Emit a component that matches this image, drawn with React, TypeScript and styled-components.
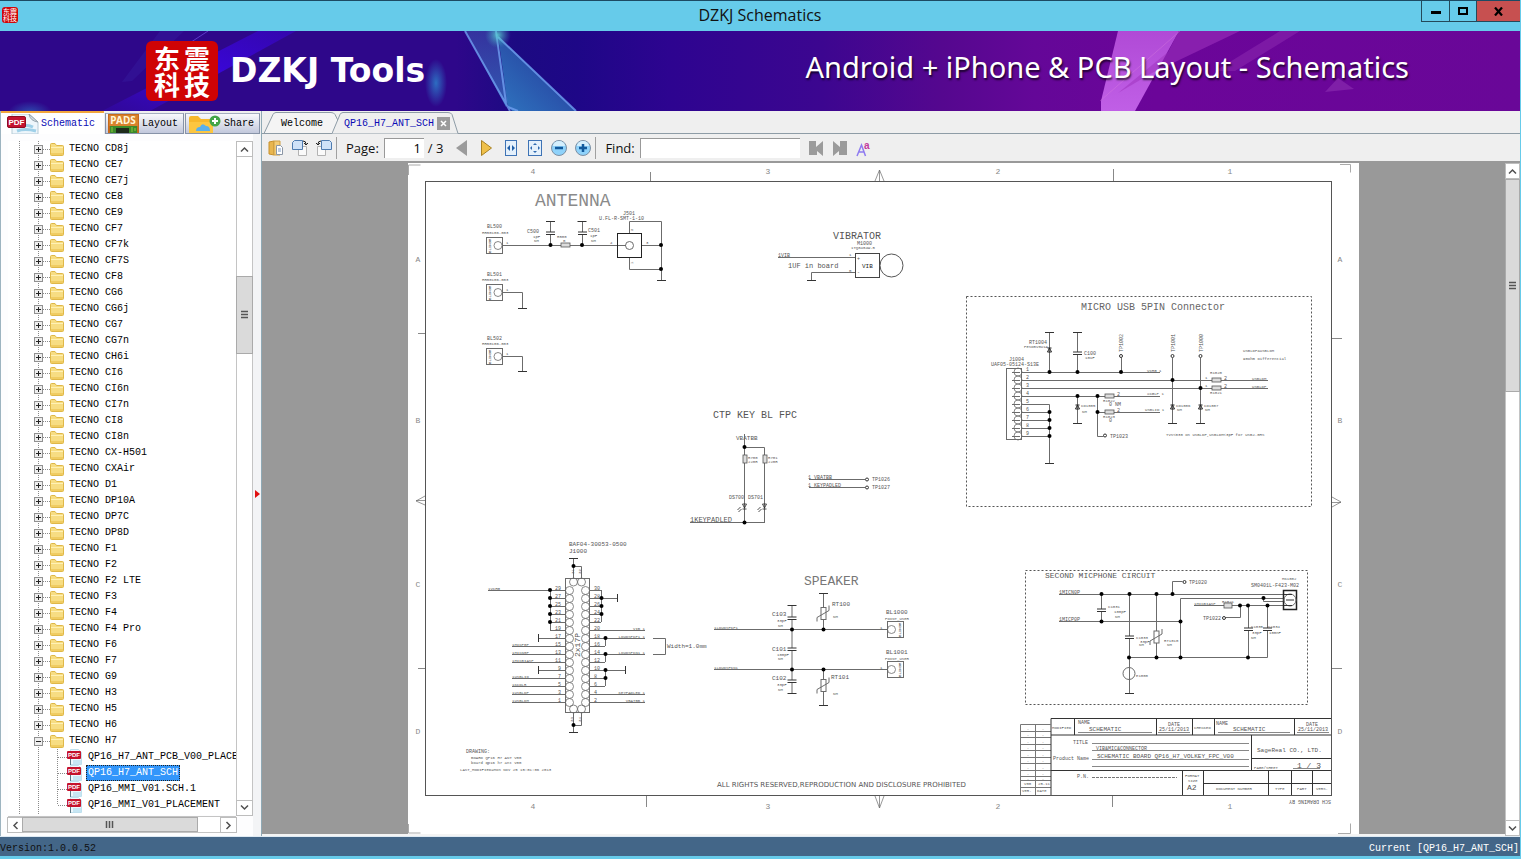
import React from 'react';
import styled, { createGlobalStyle, css } from 'styled-components';

const GlobalStyle = createGlobalStyle`
  *, *::before, *::after { box-sizing: border-box; }
  body { margin: 0; background: #66cbea; }
  button { margin: 0; padding: 0; border: 0; background: none; font: inherit; color: inherit; }
  ul { margin: 0; padding: 0; list-style: none; }
  svg { display: block; }
`;

const song = '"Liberation Mono", "Noto Sans CJK SC", monospace';
const segoe = '"Open Sans", "Noto Sans", sans-serif';

/* ---------- window frame ---------- */

const Window = styled.div`
  display: flex;
  flex-direction: column;
  min-height: 100vh;
  border-right: 1px solid #66cbea;
  border-bottom: 3px solid #66cbea;
`;

const TitleBar = styled.header`
  display: grid;
  grid-template-columns: 1fr auto 1fr;
  height: 31px;
  border-top: 1px solid #1c4a63;
  background: #66cbea;
`;

const AppTitle = styled.h1`
  margin: 0;
  font: 400 16px/29px ${segoe};
  color: #111;
`;

const SmallLogo = styled.div`
  display: grid;
  grid-template-columns: 7px 7px;
  align-content: center;
  justify-content: center;
  width: 16px;
  height: 16px;
  margin: 6px 0 0 2px;
  border-radius: 3px;
  background: #d0060a;
  color: #fff;
  font: 400 7px/7px "Noto Sans CJK SC", sans-serif;
`;

const WindowControls = styled.div`
  display: flex;
  justify-self: end;
  height: 21px;
  border: 1px solid #24495a;
  border-top: 0;
  border-right: 0;
`;

const WindowButton = styled.button<{ $close?: boolean }>`
  display: flex;
  align-items: center;
  justify-content: center;
  width: ${(p) => (p.$close ? 44 : 27)}px;
  border-left: 1px solid #24495a;
  background: ${(p) => (p.$close ? '#c75050' : 'transparent')};
  &:first-child { border-left: 0; }
`;

const Banner = styled.section`
  display: grid;
  height: 80px;
  overflow: hidden;
  background: linear-gradient(90deg, #2e078a 0%, #2e078a 30%, #1c0a82 34%, #1e0787 38%, #2d0490 44%, #3c0690 54%, #55078f 62%, #640798 68%, #6b0599 76%, #690798 100%);
  > * { grid-area: 1 / 1; }
`;

const BannerArt = styled.svg`
  width: 1521px;
  height: 80px;
`;

const BannerContent = styled.div`
  display: flex;
  align-items: center;
  padding: 0 112px 0 146px;
  color: #fff;
  z-index: 1;
`;

const Logo = styled.div`
  display: grid;
  grid-template-columns: 30px 30px;
  place-content: center;
  width: 72px;
  height: 60px;
  border-radius: 6px;
  background: #cf0305;
  text-align: center;
  font: 700 26px/26px "Noto Sans CJK SC", sans-serif;
`;

const Brand = styled.strong`
  margin-left: 12px;
  font: 700 33px/40px "DejaVu Sans", "Noto Sans", sans-serif;
`;

const Slogan = styled.p`
  margin: 0 0 8px auto;
  font: 400 29px/36px "Noto Sans", sans-serif;
  text-shadow: 1px 2px 2px rgba(0, 0, 0, 0.7);
`;

const Main = styled.main`
  display: flex;
  flex: 1;
  background: #fff;
`;

const StatusBar = styled.footer`
  display: flex;
  justify-content: space-between;
  height: 20px;
  padding: 3px 1px 0 0;
  border-top: 1px solid #dfeaf3;
  background: #436688;
  font: 10px/18px ${song};
  color: #fff;
`;

const Version = styled.span`
  color: #111;
`;

/* ---------- left side ---------- */

const Side = styled.aside`
  display: flex;
  flex-direction: column;
  width: 262px;
  border-left: 1px solid #9db4c0;
  border-right: 1px solid #8fa9b5;
  background: #fdfdfe;
`;

const SideTabs = styled.div`
  display: flex;
  gap: 1px;
  height: 23px;
  padding-right: 1px;
  background: #efefef;
`;

const SideTab = styled.button<{ $active?: boolean; $width: number }>`
  display: flex;
  align-items: center;
  gap: 3px;
  width: ${(p) => p.$width}px;
  padding: 0 2px;
  border: 1px solid #8793a8;
  border-top-color: #a4afc0;
  background: linear-gradient(#f8f9fc, #c2c8dc);
  font: 10px/20px ${song};
  margin-top: 2px;
  ${(p) =>
    p.$active &&
    css`
      margin-top: 0;
      gap: 2px;
      padding-left: 6px;
      border: 0;
      border-top: 2px solid #f2a63c;
      background: #fff;
      color: #0b0bb5;
    `}
`;

const TreeArea = styled.div`
  display: grid;
  grid-template-columns: 1fr 17px;
  grid-template-rows: 1fr 17px;
  margin: 7px 0 3px 7px;
`;

const SideBody = styled.div`
  display: grid;
  grid-template-columns: 1fr 8px;
  flex: 1;
`;

const Tree = styled.ul`
  overflow: hidden;
  width: 228px;
  height: 674px;
  background: #fff;
  font: 10px/16px ${song};
  color: #000;
`;

const dots = (dir: string) =>
  `repeating-linear-gradient(${dir}, #8a8a8a 0 1px, transparent 1px 2px)`;

const TreeItem = styled.li`
  display: flex;
  align-items: center;
  height: 16px;
  white-space: nowrap;
  > * { flex: none; }
`;

const Guide = styled.span<{ $width: number; $at: number }>`
  width: ${(p) => p.$width}px;
  height: 16px;
  background: ${dots('180deg')} ${(p) => p.$at}px 0 / 1px 16px no-repeat;
`;

const Twig = styled.span<{ $width: number }>`
  width: ${(p) => p.$width}px;
  height: 1px;
  background: ${dots('90deg')};
`;

const Elbow = styled(Guide)<{ $last?: boolean }>`
  background-size: 1px ${(p) => (p.$last ? 8 : 16)}px;
`;

const ExpanderCell = styled.span`
  display: flex;
  align-items: center;
  width: 9px;
  height: 16px;
  background: ${dots('180deg')} 4px 0 / 1px 16px no-repeat;
`;

const Expander = styled.button`
  width: 9px;
  height: 9px;
  border: 1px solid #919191;
  background: #eee;
`;

const TreeLabel = styled.span<{ $selected?: boolean }>`
  margin-left: 3px;
  padding: 0 1px;
  border: 1px dotted transparent;
  line-height: 14px;
  ${(p) =>
    p.$selected &&
    css`
      border-color: #222;
      background: #3296fb;
      color: #fff;
    `}
`;

const VBar = styled.div`
  display: flex;
  flex-direction: column;
  border-left: 1px solid #c4c4c4;
  border-right: 1px solid #c4c4c4;
  background: #fff;
`;

const HBar = styled.div`
  display: flex;
  border-top: 1px solid #c4c4c4;
  border-bottom: 1px solid #c4c4c4;
  background: #fff;
`;

const ArrowButton = styled.button`
  display: flex;
  align-items: center;
  justify-content: center;
  flex: none;
  width: 17px;
  height: 16px;
  margin: 0 -1px;
  border: 1px solid #bdbdbd;
  background: #fff;
`;

const Track = styled.span<{ $grow: number }>`
  flex: ${(p) => p.$grow} 1 0;
`;

const Thumb = styled.span<{ $grow: number }>`
  display: flex;
  align-items: center;
  justify-content: center;
  flex: ${(p) => p.$grow} 1 0;
  margin: 0 -1px;
  border: 1px solid #aaa;
  background: #dadada;
`;

const Splitter = styled.button`
  display: flex;
  align-items: center;
  padding: 18px 0 0 2px;
  background: #f3f4f6;
`;

/* ---------- right side ---------- */

const Document = styled.section`
  display: flex;
  flex: 1;
  flex-direction: column;
  min-width: 0;
`;

const DocTabs = styled.div`
  display: flex;
  height: 23px;
  padding-left: 2px;
  border-bottom: 1px solid #8e9ca6;
  background: #efefef;
`;

const DocTab = styled.button<{ $active?: boolean }>`
  display: grid;
  height: 23px;
  margin-top: 1px;
  margin-left: ${(p) => (p.$active ? -11 : 0)}px;
  font: 10px/22px ${song};
  color: ${(p) => (p.$active ? '#0b0bb5' : '#000')};
  > * { grid-area: 1 / 1; }
`;

const DocTabText = styled.span<{ $active?: boolean }>`
  display: flex;
  align-items: center;
  gap: 3px;
  padding-left: ${(p) => (p.$active ? 12 : 17)}px;
`;

const CloseMark = styled.span`
  display: flex;
  align-items: center;
  justify-content: center;
  width: 13px;
  height: 13px;
  background: #9b9b9b;
`;

const Toolbar = styled.div`
  display: flex;
  align-items: center;
  gap: 8px;
  height: 29px;
  padding-left: 6px;
  border-bottom: 2px solid #999;
  background: #efefef;
  font: 13px/20px ${segoe};
  color: #111;
  > * { flex: none; }
`;

const ToolButton = styled.button`
  display: flex;
  align-items: center;
  justify-content: center;
  width: 16px;
  height: 20px;
`;

const Separator = styled.span`
  width: 1px;
  height: 22px;
  margin: 0 1px 0 -4px;
  background: #a0a0a0;
`;

const Field = styled.label`
  display: flex;
  align-items: center;
  gap: 5px;
`;

const FieldInput = styled.input<{ $width: number }>`
  width: ${(p) => p.$width}px;
  height: 20px;
  padding: 0 3px;
  border: 0;
  border-top: 1px solid #999;
  border-left: 1px solid #999;
  background: #fff;
  font: 13px/18px ${segoe};
  text-align: right;
`;

const PageTotal = styled.span`
  margin-left: -4px;
  margin-right: 4px;
`;

const Viewer = styled.div`
  display: flex;
  flex: 1;
  background: #999;
`;

const Desk = styled.div`
  display: flex;
  justify-content: center;
  flex: 1;
  min-width: 0;
  overflow: hidden;
  border-bottom: 2px solid #f4f4f4;
`;

const ViewerBar = styled(VBar)`
  width: 15px;
  ${ArrowButton} {
    width: 15px;
  }
`;

const Sheet = styled.svg`
  flex: none;
  width: 951px;
  height: 671px;
  background: #fff;
  font-family: "Liberation Mono", monospace;
`;

/* ---------- small drawings ---------- */

const Chevron = ({ turn }: { turn: number }) => (
  <svg width="9" height="9" viewBox="0 0 9 9">
    <path d="M1 6.5 4.5 3 8 6.5" fill="none" stroke="#505050" strokeWidth="1.5" transform={`rotate(${turn} 4.5 4.5)`} />
  </svg>
);

const Grip = ({ upright }: { upright?: boolean }) => (
  <svg width="9" height="9" viewBox="0 0 9 9">
    <path d="M1 1.5h7M1 4.5h7M1 7.5h7" stroke="#555" strokeWidth="1.5" transform={upright ? 'rotate(90 4.5 4.5)' : undefined} />
  </svg>
);

const FolderIcon = () => (
  <svg width="14" height="13" viewBox="0 0 14 13">
    <path d="M.5 1.5q0-1 1-1H5l1.5 2h6q1 0 1 1v8q0 1-1 1h-11q-1 0-1-1z" fill="#f7dd83" stroke="#dfb848" />
    <path d="M1 4h12v1H1z" fill="#fff1b5" />
    <path d="M1 10h12v2H1z" fill="#f0cc62" />
  </svg>
);

const PdfIcon = ({ large }: { large?: boolean }) => (
  <svg width={large ? 32 : 16} height={large ? 20 : 16} viewBox={large ? '0 0 32 20' : '0 0 16 16'}>
    {large ? (
      <>
        <path d="M5 0h17l9 8v12H5z" fill="#eef6fb" stroke="#b6cbd6" />
        <path d="M22 0q1 7 9 8l-9-8" fill="#cfd9df" stroke="#98a6ae" />
        <path d="M12 12q8-2 14 1M10 17q8-3 19 0" stroke="#9fd0e8" strokeWidth="3" fill="none" />
        <rect x=".5" y="2.5" width="18" height="11" rx="1.5" fill="#c41230" stroke="#8e0b20" />
        <text x="9.500" y="11" fontSize="8" fontWeight="700" fill="#fff" textAnchor="middle" fontFamily="Liberation Sans">PDF</text>
      </>
    ) : (
      <>
        <path d="M3.500 .5h8l3 3v12h-11z" fill="#eef8fd" stroke="#bfe0ee" />
        <path d="M6 12h8M6 14h8" stroke="#9fd4ea" />
        <path d="M3.500 9v7" stroke="#5c7884" />
        <rect x="0" y="2" width="14" height="8" rx="1" fill="#c5122c" />
        <text x="7" y="8" fontSize="6" fontWeight="700" fill="#fff" textAnchor="middle" fontFamily="Liberation Sans">PDF</text>
      </>
    )}
  </svg>
);

const PadsIcon = () => (
  <svg width="31" height="19" viewBox="0 0 31 19">
    <rect width="31" height="19" fill="#c66a1c" />
    <rect x="1" y="1" width="29" height="11" fill="#d8822c" />
    <text x="15" y="10" fontSize="10" fontWeight="700" fill="#fff6d8" textAnchor="middle" fontFamily="Noto Sans">PADS</text>
    <rect x="2" y="12" width="27" height="7" fill="#3c8a2a" />
    <rect x="8" y="14" width="13" height="5" fill="#1d2b1a" />
    <path d="M4 13v5M24 13v5M27 14v3" stroke="#8cc63f" />
  </svg>
);

const ShareIcon = () => (
  <svg width="33" height="19" viewBox="0 0 33 19">
    <path d="M1 4q0-2 2-2h7l3 3h9q3 0 3 2v12H1z" fill="#f7b82c" />
    <path d="M1 8h24v11H1z" fill="#fcc640" />
    <path d="M8 17q0-4 4-4 2-5 6-1 4 0 4 5z" fill="#5ab0ea" />
    <circle cx="27" cy="7" r="5.500" fill="#43a548" />
    <path d="M27 4v6M24 7h6" stroke="#fff" strokeWidth="2" />
  </svg>
);

const ToolIcon = ({ kind }: { kind: string }) => (
  <svg width="16" height="18" viewBox="0 0 16 18">
    {kind === 'open' && (
      <>
        <path d="M1 3 6 2v14l-5-1z" fill="#e8b64f" stroke="#c8912c" />
        <path d="M6 2h6v14H6z" fill="#f3cd78" stroke="#cfa044" />
        <path d="M8.500 6.500h4l2 2v7h-6z" fill="#fff" stroke="#8b96a5" />
        <path d="M10 10h3M10 12h3" stroke="#7a9ac4" />
      </>
    )}
    {(kind === 'left' || kind === 'right') && (
      <g transform={kind === 'right' ? 'translate(16 0) scale(-1 1)' : undefined}>
        <path d="M8.500 7.500h6v9h-8v-6" fill="#fafafa" stroke="#b3b3b3" />
        <path d="M2.500 1.500h8v9h-10v-7z" fill="#cfe2f8" stroke="#4f7cb0" />
        <path d="M11 2q3 0 3 3M12 4l2 2 2-2" fill="none" stroke="#222" />
      </g>
    )}
    {kind === 'prev' && <path d="M12 1v16L1 9z" fill="#9b9b9b" />}
    {kind === 'next' && <path d="M2.500 1.500v15l10-7.500z" fill="#efc04a" stroke="#a98224" />}
    {kind === 'width' && (
      <>
        <rect x="2.500" y="1.500" width="11" height="15" fill="#e4f0fb" stroke="#3e73b5" />
        <path d="M7 6v6L4 9zM9 6v6l3-3z" fill="#1f5fa8" />
      </>
    )}
    {kind === 'fit' && (
      <>
        <rect x="1.500" y="1.500" width="13" height="15" fill="#e4f0fb" stroke="#3e73b5" />
        <path d="M8 4l2 2H6zM8 14l2-2H6zM3 9l2-2v4zM13 9l-2-2v4z" fill="#2f6ab0" />
      </>
    )}
    {(kind === 'minus' || kind === 'plus') && (
      <>
        <circle cx="8" cy="9" r="7.500" fill="#8fd2fa" stroke="#7c8fa3" />
        <path d="M2 7a6 5 0 0 1 12 0z" fill="#d5effd" />
        <path d={kind === 'minus' ? 'M4 9h8' : 'M4 9h8M8 5v8'} stroke="#12599c" strokeWidth="2.500" />
      </>
    )}
    {(kind === 'findPrev' || kind === 'findNext') && (
      <g transform={kind === 'findNext' ? 'translate(16 0) scale(-1 1)' : undefined} fill="#9b9b9b">
        <path d="M1 2h7v6l7-6v15l-6-5v4H1z" />
      </g>
    )}
    {kind === 'case' && (
      <>
        <path d="M1 17 5.500 6l4 11M3 13h5" fill="none" stroke="#8f7bf0" strokeWidth="1.500" />
        <text x="8" y="10" fontSize="10" fontWeight="700" fill="#c33a9c" fontFamily="Liberation Sans">a</text>
      </>
    )}
  </svg>
);

/* ---------- schematic primitives ---------- */

const INK = '#6b6b6b';

const T = ({ x, y, s = 5, c = '#555', a, v, children }: {
  x: number; y: number; s?: number; c?: string; a?: 'start' | 'middle' | 'end'; v?: boolean; children: React.ReactNode;
}) => (
  <text x={x} y={y} fontSize={s} fill={c} textAnchor={a} transform={v ? `rotate(-90 ${x} ${y})` : undefined}>
    {children}
  </text>
);

const W = ({ d, c = INK, w = 1 }: { d: string; c?: string; w?: number }) => (
  <path d={d} fill="none" stroke={c} strokeWidth={w} />
);

const Dots = ({ at }: { at: number[][] }) => (
  <>{at.map(([x, y]) => <circle key={`${x}-${y}`} cx={x} cy={y} r="2" fill="#000" />)}</>
);

const Cap = ({ x, y }: { x: number; y: number }) => (
  <>
    <rect x={x - 4} y={y - 1} width="8" height="2" fill="#fff" />
    <W d={`M${x - 4.5} ${y - 1}h9M${x - 4.5} ${y + 1.5}h9`} c="#333" />
  </>
);

const Diode = ({ x, y }: { x: number; y: number }) => (
  <path d={`M${x - 2} ${y - 2}h4M${x - 2} ${y + 2}l2-4 2 4z`} fill="none" stroke="#222" />
);

const Led = ({ x, y }: { x: number; y: number }) => (
  <path d={`M${x - 2} ${y - 3}h4l-2 4zM${x - 2} ${y + 2}h4M${x - 4} ${y}l-3 3M${x - 3} ${y + 2}l-3 3`} fill="none" stroke="#222" strokeWidth=".8" />
);

const Resistor = ({ x, y, w = 9, h = 4 }: { x: number; y: number; w?: number; h?: number }) => (
  <rect x={x} y={y} width={w} height={h} fill="#ddd" stroke="#555" strokeWidth=".8" />
);

const Varistor = ({ x, y }: { x: number; y: number }) => (
  <>
    <rect x={x - 2.5} y={y - 6} width="5" height="12" fill="#fff" stroke={INK} />
    <W d={`M${x - 6.500} ${y + 8}v-4l12-7v-5`} />
  </>
);

const Bar = ({ x, y, v }: { x: number; y: number; v?: boolean }) => (
  <W d={v ? `M${x} ${y - 4}v8` : `M${x - 4.5} ${y}h9`} c="#333" />
);

const Pad = ({ x, y, flip }: { x: number; y: number; flip?: boolean }) => (
  <>
    <rect x={x + 0.5} y={y + 0.5} width="16" height="16" fill="none" stroke={INK} />
    <circle cx={flip ? x + 4.500 : x + 12} cy={y + 8.5} r="4" fill="none" stroke={INK} strokeWidth=".8" />
    <T x={flip ? x + 14 : x + 5} y={y + 16} s={4} c="#444" v>BLINGR</T>
  </>
);

const Probe = ({ x, y }: { x: number; y: number }) => (
  <circle cx={x} cy={y} r="1.500" fill="#fff" stroke="#333" />
);

const FrameAndZones = () => (
  <g>
    <rect x="425.500" y="181.500" width="906" height="614" fill="none" stroke="#555" />
    <W d="M650.500 172v9M1113.500 169v12M646.500 796v11M1112.500 796v11M418 333.500h7M418 668.500h7M1332 338.500h10M1332 668.500h10" c="#888" />
    <W d="M408.500 175v-10h12M1340 164.500h10.500v8M408.500 824v9h12M1338 833.500h12.500v-10" c="#aaa" />
    <W d="M875 181l4.500-11 4.500 11M879.500 170v11M875 796l4.500 12 4.500-12M879.500 796v12M425 496l-9 5 9 4M416 500.500h9M1332 497l9 5-9 5M1332 502.500h9" w={0.7} />
    {['4', '3', '2', '1'].map((n, i) => {
      const x = [533, 768, 998, 1230][i];
      return (
        <g key={n}>
          <T x={x} y={174} s={8} a="middle" c="#888">{n}</T>
          <T x={x} y={809} s={8} a="middle" c="#888">{n}</T>
        </g>
      );
    })}
    {['A', 'B', 'C', 'D'].map((n, i) => {
      const y = [262, 423, 587, 734][i];
      return (
        <g key={n}>
          <T x={418} y={y} s={8} a="middle" c="#888">{n}</T>
          <T x={1340} y={y} s={8} a="middle" c="#888">{n}</T>
        </g>
      );
    })}
  </g>
);

const Antenna = () => (
  <g>
    <T x={535} y={206} s={18} c="#8a8a8a">ANTENNA</T>
    <W d="M503 245.500h114M550.500 222v23M582.500 222v23M641 245.500h20M629.500 233v-11.500h32V280M629.500 257v12.500h32M503 292.500h19.500V308M503 356.500h19.500V371" />
    <Cap x={550.5} y={233} />
    <Cap x={582.5} y={233} />
    <Bar x={550.5} y={221.5} /><Bar x={582} y={221.5} /><Bar x={661.5} y={280.5} />
    <Bar x={522.5} y={308.5} /><Bar x={522.5} y={371.5} />
    <Resistor x={561} y={243} />
    <rect x="617.500" y="233.500" width="24" height="24" fill="#fff" stroke="#222" />
    <circle cx="629.500" cy="245.500" r="4" fill="none" stroke={INK} />
    <W d="M618 245.500h8" />
    <Dots at={[[550.5, 245], [582, 245], [661, 245], [661, 269]]} />
    {[237, 284, 348].map((y, i) => (
      <g key={y}>
        <Pad x={486} y={y} />
        <T x={487} y={i === 0 ? y - 9 : y - 8}>{`BL50${i}`}</T>
        <T x={482} y={y - 3} s={4}>HR50106-003</T>
        <T x={506} y={y + 7} s={4}>1</T>
      </g>
    ))}
    <T x={527} y={233}>C500</T><T x={533} y={238} s={4}>1pF</T><T x={534} y={242} s={4}>NM</T>
    <T x={557} y={238} s={4}>R500</T><T x={563} y={242} s={4}>0</T>
    <T x={588} y={232}>C501</T><T x={590} y={237} s={4}>1pF</T><T x={591} y={242} s={4}>NM</T>
    <T x={623} y={215}>J501</T><T x={599} y={220}>U.FL-R-SMT-1-10</T>
    <T x={610} y={244} s={4}>4</T><T x={646} y={244} s={4}>3</T><T x={633} y={231} s={4} v>2</T><T x={633} y={264} s={4} v>1</T>
  </g>
);

const Vibrator = () => (
  <g>
    <T x={833} y={239} s={10}>VIBRATOR</T>
    <T x={857} y={245}>M1000</T><T x={851} y={249} s={4}>1TQ0404W-5</T>
    <W d="M778 257.500h77M855 272.500h-43.500v8" />
    <Bar x={811.5} y={280.5} />
    <rect x="855.500" y="253.500" width="24" height="24" fill="none" stroke="#444" />
    <circle cx="891.500" cy="265.500" r="11.500" fill="none" stroke="#555" />
    <T x={862} y={268} s={6} c="#222">VIB</T><T x={857} y={260}>+</T><T x={857} y={274}>-</T>
    <T x={778} y={257}>1VIB</T><T x={788} y={268} s={7}>1UF in board</T>
    <T x={849} y={256} s={4}>1</T><T x={849} y={272} s={4}>0</T>
  </g>
);

const KeyBacklight = () => (
  <g>
    <T x={713} y={418} s={10}>CTP KEY BL FPC</T>
    <T x={736} y={440} s={6}>VBATBB</T>
    <W d="M744.500 434v88M744.500 447.500h20V522.500M690 522.500h75M809 479.500h56M809 487.500h56" />
    <Resistor x={743} y={455} w={4} h={8} /><Resistor x={763} y={455} w={4} h={8} />
    <T x={748} y={459} s={4}>R700</T><T x={748} y={463} s={4}>220R</T>
    <T x={768} y={459} s={4}>R701</T><T x={768} y={463} s={4}>220R</T>
    <T x={729} y={499}>DS700</T><T x={748} y={499}>DS701</T>
    <Led x={744.5} y={507} /><Led x={764.5} y={507} />
    <Dots at={[[744.5, 447], [744.5, 522.5]]} />
    <T x={690} y={522} s={7}>1KEYPADLED</T>
    <T x={808} y={479}>1 VBATBB</T><T x={808} y={487}>1 KEYPADLED</T>
    <Probe x={867} y={479.5} /><Probe x={867} y={487.5} />
    <T x={872} y={481}>TP1026</T><T x={872} y={489}>TP1027</T>
  </g>
);

const UsbConnector = () => (
  <g>
    <rect x="966.500" y="296.500" width="345" height="210" fill="none" stroke="#555" strokeDasharray="2 2" />
    <T x={1081} y={310} s={10} c="#666">MICRO USB 5PIN Connector</T>
    <rect x="1006.500" y="368.500" width="15" height="71" fill="none" stroke={INK} />
    {[1, 2, 3, 4, 5, 6, 7, 8, 9].map((n, i) => (
      <g key={n}>
        <circle cx="1018" cy={372 + i * 8} r="4" fill="none" stroke={INK} strokeWidth=".8" />
        <W d={`M1012 ${372.5 + i * 8}h8`} />
        <T x={1026} y={371 + i * 8}>{n}</T>
      </g>
    ))}
    <W d="M1021 372.500h139M1021 380.500h247M1021 388.500h247M1021 396.500h139M1021 404.500h28.500V463M1021 412.500h28M1021 420.500h28M1021 428.500h28M1021 436.500h28M1097 412.500h63M1097.500 396v40.500h6" />
    <W d="M1049.500 332v40M1077.500 332v40M1121.500 358v14M1172.500 358v66M1200.500 358v66M1077.500 396v28" />
    <Cap x={1077.5} y={353} />
    <Diode x={1049.5} y={350} /><Diode x={1077.5} y={407} /><Diode x={1172.5} y={407} /><Diode x={1200.5} y={407} />
    {[[1049.5, 332.5], [1077.5, 332.5], [1049.5, 463.5], [1077.5, 423.5], [1172.5, 423.5], [1200.5, 423.5]].map(([x, y]) => (
      <Bar key={`${x}${y}`} x={x} y={y} />
    ))}
    <Dots at={[[1049.5, 372], [1077.5, 372], [1121, 372], [1172.5, 380], [1200.5, 388], [1077.5, 396], [1097.5, 396], [1097.5, 412], [1049.5, 412], [1049.5, 420], [1049.5, 428], [1049.5, 436]]} />
    <Probe x={1121} y={356} /><Probe x={1172.5} y={356} /><Probe x={1200.5} y={356} /><Probe x={1105} y={435.5} />
    <T x={1123} y={352} v>TP1002</T><T x={1175} y={352} v>TP1001</T><T x={1203} y={352} v>TP1000</T>
    <T x={1110} y={438}>TP1023</T>
    <T x={1029} y={344}>RT1004</T><T x={1024} y={348} s={4}>PESD5V0U1A</T>
    <T x={1009} y={361}>J1004</T><T x={991} y={366}>UAF05-05124-S13E</T>
    <T x={1084} y={355}>C100</T><T x={1085} y={359} s={4}>10uF</T>
    <T x={1147} y={372} s={4}>VCHG 1</T><T x={1147} y={395} s={4}>XCGLP 1</T><T x={1145} y={411} s={4}>USBLID 1</T>
    <T x={1210} y={374} s={4}>R1020</T><T x={1210} y={394} s={4}>R1021</T>
    {[[1212, 378], [1212, 386], [1105, 394], [1105, 410]].map(([x, y]) => (
      <g key={`${x}${y}`}>
        <Resistor x={x} y={y} />
        <T x={x + 12} y={y + 2}>2</T>
      </g>
    ))}
    <T x={1103} y={402} s={4}>R1022</T><T x={1103} y={418} s={4}>R1023</T>
    <T x={1109} y={406} s={5}>0 NM</T><T x={1109} y={422} s={5}>0</T>
    <T x={1205} y={379} s={4}>1</T><T x={1205} y={387} s={4}>1</T>
    <T x={1081} y={407} s={4}>CD1005</T><T x={1082} y={413} s={4}>NM</T>
    <T x={1176} y={407} s={4}>CD1006</T><T x={1177} y={411} s={4}>NM</T>
    <T x={1204} y={407} s={4}>CD1007</T><T x={1205} y={411} s={4}>NM</T>
    <T x={1252} y={380} s={4}>USBLDM</T><T x={1252} y={388} s={4}>USBLDP</T>
    <T x={1243} y={352} s={4}>USBLDP&amp;USBLDM</T><T x={1243} y={360} s={4}>90ohm Differential</T>
    <T x={1166} y={436} s={4}>TVS&lt;030 on USBLDP,USBLDM&lt;3pF for USB2.0HS</T>
  </g>
);

const leftNets: Record<number, string> = { 0: '1VCHG', 7: '1MICP0P', 8: '1MICN0P', 9: '1MICBIASP', 11: '1USBLID', 12: '1KCOLR', 13: '1USBLDP', 14: '1USBLDM' };
const rightNets: Record<number, string> = { 5: 'VIB 1', 6: 'LOUDSPKP1 1', 8: 'LOUDSPKN1 1', 13: 'KEYPADLED 1', 14: 'VBATBB 1' };

const BoardConnector = () => (
  <g>
    <T x={569} y={546} s={6}>BAF04-30053-0500</T><T x={569} y={553} s={6}>J1000</T>
    <rect x="565.500" y="578.500" width="24" height="134" fill="none" stroke={INK} />
    {Array.from({ length: 15 }, (_, i) => {
      const y = 590.5 + i * 8;
      const leftEnd = i === 0 ? 488 : i < 6 ? 550 : i === 6 || i === 10 ? 538 : 512;
      const rightEnd = [601, 617, 601, 601, 601, 645, 645, 605, 645, 605, 625, 605, 605, 645, 645][i];
      return (
        <g key={i}>
          <circle cx="569.500" cy={y} r="4" fill="none" stroke={INK} strokeWidth=".8" />
          <circle cx="585.500" cy={y} r="4" fill="none" stroke={INK} strokeWidth=".8" />
          <W d={`M${leftEnd} ${y}H565M589 ${y}H${rightEnd}`} />
          <T x={561} y={y - 1} a="end">{29 - 2 * i}</T>
          <T x={594} y={y - 1}>{30 - 2 * i}</T>
          {leftNets[i] && <T x={i === 0 ? 488 : 512} y={y - 1} s={4}>{leftNets[i]}</T>}
          {rightNets[i] && <T x={645} y={y - 1} s={4} a="end">{rightNets[i]}</T>}
        </g>
      );
    })}
    {[573.5, 581.5].map((x) => (
      <g key={x}>
        <circle cx={x} cy="582" r="4" fill="none" stroke={INK} strokeWidth=".8" />
        <circle cx={x} cy="709" r="4" fill="none" stroke={INK} strokeWidth=".8" />
      </g>
    ))}
    <W d="M573.500 558v21M573.500 566.500h8V578M573.500 713v19M573.500 725.500h8V713M550.500 590v40M601.500 590v32M605.500 638v8M605.500 654v8M605.500 670v16M653 638.500h12.500v16H653" />
    <Bar x={573.5} y={558.5} /><Bar x={573.5} y={732.5} />
    <Bar x={538.5} y={638} v /><Bar x={538.5} y={670} v /><Bar x={617.5} y={598} v /><Bar x={625.5} y={670} v />
    <Dots at={[[573.5, 566], [573.5, 725], [550, 590], [550, 598], [550, 606], [550, 614], [550, 622], [601.5, 598], [601.5, 606], [601.5, 614], [605.5, 638], [605.5, 654], [605.5, 670], [605.5, 678]]} />
    <T x={574} y={574} s={4} v>31</T><T x={581} y={574} s={4} v>32</T><T x={573} y={722} s={4} v>33</T><T x={581} y={722} s={4} v>34</T>
    <T x={580} y={657} s={8} v>2x17P</T>
    <T x={667} y={648} s={6}>Width=1.0mm</T>
    <T x={466} y={753}>DRAWING:</T>
    <T x={471} y={759} s={4}>BOARD QP16 H7 ANT V00</T><T x={471} y={764} s={4}>board qp16 h7 ant v00</T>
    <T x={460} y={771} s={4}>LAST_MODIFIED=Mon Nov 25 15:01:06 2013</T>
  </g>
);

const Speaker = () => (
  <g>
    <T x={804} y={585} s={13} c="#777">SPEAKER</T>
    <W d="M714 629.500h173M714 669.500h173M792 606v87M823.500 594v36M823.500 670v35" />
    <Cap x={792} y={618} /><Cap x={792} y={649} /><Cap x={792} y={681} />
    <Varistor x={823.5} y={613.5} /><Varistor x={823.5} y={685.5} />
    <Bar x={792} y={605.5} /><Bar x={792} y={693.5} /><Bar x={823.5} y={593.5} /><Bar x={823.5} y={705.5} />
    <Dots at={[[792, 629.5], [823.5, 629.5], [792, 669.5], [823.5, 669.5]]} />
    <T x={772} y={616} s={6}>C103</T><T x={777} y={622} s={4}>33pF</T><T x={778} y={627} s={4}>NM</T>
    <T x={772} y={651} s={6}>C101</T><T x={777} y={656} s={4}>100pF</T><T x={778} y={660} s={4}>NM</T>
    <T x={772} y={680} s={6}>C102</T><T x={777} y={686} s={4}>33pF</T><T x={778} y={691} s={4}>NM</T>
    <T x={832} y={606} s={6}>RT100</T><T x={833} y={618} s={4}>NM</T>
    <T x={831} y={679} s={6}>RT101</T><T x={833} y={695} s={4}>NM</T>
    <T x={714} y={629} s={4}>1LOUDSPKP1</T><T x={714} y={669} s={4}>1LOUDSPKN1</T>
    <T x={886} y={614} s={6}>BL1000</T><T x={885} y={620} s={4}>POINT_USER</T>
    <T x={886} y={654} s={6}>BL1001</T><T x={885} y={660} s={4}>POINT_USER</T>
    <Pad x={887} y={621} flip /><Pad x={887} y={661} flip />
    <T x={880} y={629} s={4}>1</T><T x={880} y={669} s={4}>1</T>
    <text x="717" y="787" fontSize="7" fill="#555" fontFamily="DejaVu Sans">ALL RIGHTS RESERVED,REPRODUCTION AND DISCLOSURE PROHIBITED</text>
  </g>
);

const Microphone = () => (
  <g>
    <rect x="1025.500" y="570.500" width="282" height="134" fill="none" stroke="#555" strokeDasharray="2 2" />
    <T x={1045} y={578} s={8}>SECOND MICPHONE CIRCUIT</T>
    <W d="M1059 594.500h224M1172.500 594v-12.500h10M1059 621.500h121M1180.500 657V598.500h103M1263.500 598v3.500h20M1194 605.500h89M1240.500 605v12.500h-15M1248.500 605v52M1267.500 605v52.500M1129 657.500h138.500M1101.500 594v27M1129.500 594v99M1156.500 594v63" />
    <Cap x={1101.5} y={610} /><Cap x={1129.5} y={637} /><Cap x={1248.5} y={629} /><Cap x={1267.5} y={629} />
    <Varistor x={1156.5} y={637} />
    <circle cx="1129" cy="673.500" r="6" fill="none" stroke={INK} />
    <Bar x={1129.5} y={693.5} />
    <Resistor x={1224} y={603} w={8} h={5} />
    <Dots at={[[1101.5, 594], [1129.5, 594], [1156.5, 594], [1172.5, 594], [1101.5, 621.5], [1180.5, 621.5], [1263.5, 598], [1240, 605.5], [1248, 605.5], [1267.5, 605.5], [1129, 657.5], [1156.5, 657.5], [1180.5, 657.5], [1248, 657.5]]} />
    <Probe x={1184.5} y={582} /><Probe x={1224} y={618} />
    <T x={1189} y={584}>TP1020</T><T x={1203} y={620}>TP1022</T>
    <rect x="1283.500" y="590.500" width="13" height="19" fill="none" stroke="#222" strokeWidth="1.500" />
    <circle cx="1290" cy="600" r="6" fill="none" stroke={INK} />
    <W d="M1284 594.500h8M1284 605.500h8M1286 600h8" c="#333" />
    <T x={1282} y={580} s={4}>MK1002</T><T x={1251} y={587}>SM0401L-F423-M02</T>
    <T x={1059} y={594}>1MICN0P</T><T x={1059} y={621}>1MICP0P</T>
    <T x={1108} y={608} s={4}>C1031</T><T x={1114} y={613} s={4}>100pF</T><T x={1115} y={618} s={4}>NM</T>
    <T x={1136} y={639} s={4}>C1033</T><T x={1140} y={643} s={4}>33pF</T><T x={1139} y={646} s={4}>NM</T>
    <T x={1164} y={642} s={4}>RT1010</T><T x={1167} y={646} s={4}>NM</T>
    <T x={1136} y={677} s={4}>E1000</T>
    <T x={1194} y={605} s={4}>1MICBIASP</T><T x={1222} y={603} s={4}>R1021</T>
    <T x={1251} y={628} s={4}>C1035</T><T x={1252} y={634} s={4}>33pF</T><T x={1251} y={639} s={4}>NM</T>
    <T x={1268} y={628} s={4}>C1034</T><T x={1269} y={634} s={4}>100nF</T>
  </g>
);

const TitleBlock = () => (
  <g>
    <W d="M1020.500 795V724.500h30M1035.500 724v71M1020 731.500h31M1020 737.500h31M1020 744.500h31M1020 750.500h31M1020 757.500h31M1020 763.500h31M1020 770.500h31M1020 776.500h31M1020 780.500h31M1020 787.500h31" c="#777" />
    {[730, 736, 743, 749, 756, 762, 769, 775, 780].map((y) => (
      <g key={y}>
        <T x={1028} y={y} s={4} a="middle">-</T>
        <T x={1043} y={y} s={4} a="middle">-</T>
      </g>
    ))}
    <T x={1024} y={785} s={4}>V00</T><T x={1038} y={785} s={4}>25-11</T>
    <T x={1022} y={792} s={4}>VER.</T><T x={1037} y={792} s={4}>DATE</T>
    <W d="M1051 795V718.500h280M1051 735h280M1051 770.500h280M1251.500 735v35M1251 758.500h80M1182.500 770v25M1203.500 770v25M1203 783.500h128M1268.500 770v25M1291.500 770v25M1312.500 770v25M1074.500 718v17M1156.500 718v17M1192.500 718v17M1214.500 718v17M1294.500 718v17" c="#333" />
    <W d="M1078 732.500h74M1158 732.500h32M1218 732.500h72M1297 732.500h32M1092 743.500h157M1092 750.500h157M1092 759.500h157M1092 766.500h157M1293 768.500h27" c="#888" />
    <path d="M1092 777.500h85" stroke="#777" strokeDasharray="3 1" />
    <T x={1052} y={729} s={4}>MODIFIED</T><T x={1078} y={724}>NAME</T><T x={1089} y={731} s={6}>SCHEMATIC</T>
    <T x={1168} y={726}>DATE</T><T x={1159} y={731}>25/11/2013</T>
    <T x={1194} y={729} s={4}>CHECKED</T><T x={1216} y={725}>NAME</T><T x={1233} y={731} s={6}>SCHEMATIC</T>
    <T x={1306} y={726}>DATE</T><T x={1298} y={731}>25/11/2013</T>
    <T x={1073} y={744}>TITLE</T><T x={1096} y={750}>VIB&amp;MIC&amp;CONNECTOR</T>
    <T x={1053} y={760}>Product Name</T><T x={1097} y={758} s={6}>SCHEMATIC BOARD QP16_H7_VOLKEY_FPC_V00</T>
    <T x={1257} y={752} s={6}>SageReal CO., LTD.</T>
    <T x={1254} y={769} s={4}>PAGE/SHEET</T><T x={1297} y={768} s={8}>1 / 3</T>
    <T x={1077} y={778}>P.N.</T>
    <T x={1185} y={777} s={4}>FORMAT</T><T x={1188} y={782} s={4}>SIZE</T><T x={1187} y={790} s={8}>A2</T>
    <T x={1216} y={790} s={4}>DOCUMENT NUMBER</T><T x={1275} y={790} s={4}>TYPE</T><T x={1297} y={790} s={4}>PART</T><T x={1316} y={790} s={4}>VERS.</T>
    <text x="1331" y="800" fontSize="5" fill="#555" transform="rotate(180 1331 800)">SCH DRAWING BY</text>
  </g>
);

/* ---------- content ---------- */

const folders = [
  'CD8j', 'CE7', 'CE7j', 'CE8', 'CE9', 'CF7', 'CF7k', 'CF7S', 'CF8', 'CG6', 'CG6j', 'CG7', 'CG7n', 'CH6i',
  'CI6', 'CI6n', 'CI7n', 'CI8', 'CI8n', 'CX-H501', 'CXAir', 'D1', 'DP10A', 'DP7C', 'DP8D', 'F1', 'F2',
  'F2 LTE', 'F3', 'F4', 'F4 Pro', 'F6', 'F7', 'G9', 'H3', 'H5', 'H6', 'H7',
];

const files = ['QP16_H7_ANT_PCB_V00_PLACEMENT', 'QP16_H7_ANT_SCH', 'QP16_MMI_V01.SCH.1', 'QP16_MMI_V01_PLACEMENT'];

const Folder = ({ name, open }: { name: string; open?: boolean }) => (
  <TreeItem>
    <Guide $width={26} $at={11} />
    <ExpanderCell>
      <Expander aria-label={open ? `Collapse ${name}` : `Expand ${name || 'folder'}`}>
        <svg width="7" height="7"><path d={open ? 'M1 3.500h5' : 'M1 3.500h5M3.500 1v5'} stroke="#222" /></svg>
      </Expander>
    </ExpanderCell>
    <Twig $width={7} />
    <FolderIcon />
    <TreeLabel>{name}</TreeLabel>
  </TreeItem>
);

export default function App() {
  return (
    <Window>
      <GlobalStyle />
      <TitleBar>
        <SmallLogo aria-hidden="true"><span>东</span><span>震</span><span>科</span><span>技</span></SmallLogo>
        <AppTitle>DZKJ Schematics</AppTitle>
        <WindowControls>
          <WindowButton aria-label="Minimize"><svg width="10" height="10"><path d="M0 6.500h10" stroke="#000" strokeWidth="3" /></svg></WindowButton>
          <WindowButton aria-label="Maximize"><svg width="10" height="8"><rect x="1" y="1" width="8" height="6" fill="none" stroke="#000" strokeWidth="2" /></svg></WindowButton>
          <WindowButton aria-label="Close" $close><svg width="9" height="9"><path d="M1 .5l7 8M8 .5l-7 8" stroke="#000" strokeWidth="2.200" /></svg></WindowButton>
        </WindowControls>
      </TitleBar>

      <Banner>
        <BannerArt viewBox="0 0 1521 80" aria-hidden="true">
          <defs>
            <linearGradient id="stripe" x1="0" y1="1" x2="1" y2="0">
              <stop offset="0" stopColor="#3a0bd0" stopOpacity=".2" />
              <stop offset=".5" stopColor="#3a06e0" stopOpacity=".95" />
              <stop offset="1" stopColor="#3a06d0" stopOpacity=".5" />
            </linearGradient>
            <linearGradient id="prism" x1="0" y1="0" x2="0" y2="1">
              <stop offset="0" stopColor="#3d4fae" />
              <stop offset="1" stopColor="#3f8fd0" />
            </linearGradient>
            <linearGradient id="wing" x1="0" y1="1" x2="1" y2="0">
              <stop offset="0" stopColor="#3390cf" />
              <stop offset="1" stopColor="#263a99" />
            </linearGradient>
            <linearGradient id="pink" x1="0" y1="0" x2="0" y2="1">
              <stop offset="0" stopColor="#b04ad6" />
              <stop offset="1" stopColor="#c05fe6" />
            </linearGradient>
            <radialGradient id="glow">
              <stop offset="0" stopColor="#2d78c8" stopOpacity=".9" />
              <stop offset="1" stopColor="#2d78c8" stopOpacity="0" />
            </radialGradient>
            <radialGradient id="spark">
              <stop offset="0" stopColor="#5fe0d8" stopOpacity=".8" />
              <stop offset="1" stopColor="#3fa0c0" stopOpacity="0" />
            </radialGradient>
          </defs>
          <path d="M258 0h38L150 80h-48z" fill="url(#stripe)" />
          <path d="M160 0h24L132 50l-10 1z" fill="#33179a" opacity=".6" />
          <path d="M208 0 150 38" stroke="#5c3ac8" />
          <ellipse cx="436" cy="52" rx="11" ry="24" fill="url(#glow)" />
          <ellipse cx="30" cy="82" rx="22" ry="12" fill="url(#glow)" opacity=".7" />
          <path d="M465 0h31l12 72-2 4z" fill="url(#prism)" opacity=".6" />
          <path d="M498 5 576 80h-64l-4-4z" fill="url(#wing)" opacity=".8" />
          <path d="M465 0 510 80M496 0l10 72M498 6l78 74M508 76l10 4" stroke="#6f9ff0" strokeWidth="2" fill="none" opacity=".8" />
          <circle cx="498" cy="4" r="13" fill="url(#spark)" />
          <path d="M1118 0h61l-44 80h-34v-10z" fill="url(#pink)" />
          <path d="M1179 0h61l-88 42-34 20 50-41z" fill="#a034c0" opacity=".55" />
          <path d="M1280 0h20l-65 40h-20z" fill="#8826ae" opacity=".6" />
          <path d="M1338 47l16 11-29 3z" fill="#8526ab" opacity=".8" />
          <path d="M1180 0 1100 70" stroke="#e48ae0" opacity=".3" />
        </BannerArt>
        <BannerContent>
          <Logo><span>东</span><span>震</span><span>科</span><span>技</span></Logo>
          <Brand>DZKJ Tools</Brand>
          <Slogan>Android + iPhone &amp; PCB Layout - Schematics</Slogan>
        </BannerContent>
      </Banner>

      <Main>
        <Side>
          <SideTabs role="tablist">
            <SideTab role="tab" aria-selected="true" $active $width={103}><PdfIcon large />Schematic</SideTab>
            <SideTab role="tab" aria-selected="false" $width={79}><PadsIcon />Layout</SideTab>
            <SideTab role="tab" aria-selected="false" $width={75}><ShareIcon />Share</SideTab>
          </SideTabs>
          <SideBody>
            <TreeArea>
              <Tree>
                {folders.map((f) => <Folder key={f} name={`TECNO ${f}`} open={f === 'H7'} />)}
                {files.map((f, i) => (
                  <TreeItem key={f}>
                    <Guide $width={26} $at={11} />
                    <Guide $width={23} $at={4} />
                    <Elbow $width={1} $at={0} $last={i === 3} />
                    <Twig $width={9} />
                    <PdfIcon />
                    <TreeLabel $selected={i === 1}>{f}</TreeLabel>
                  </TreeItem>
                ))}
                <Folder name="" />
              </Tree>
              <VBar>
                <ArrowButton aria-label="Scroll up"><Chevron turn={0} /></ArrowButton>
                <Track $grow={119} />
                <Thumb $grow={76}><Grip /></Thumb>
                <Track $grow={447} />
                <ArrowButton aria-label="Scroll down"><Chevron turn={180} /></ArrowButton>
              </VBar>
              <HBar>
                <ArrowButton aria-label="Scroll left"><Chevron turn={-90} /></ArrowButton>
                <Thumb $grow={172}><Grip upright /></Thumb>
                <Track $grow={24} />
                <ArrowButton aria-label="Scroll right"><Chevron turn={90} /></ArrowButton>
              </HBar>
            </TreeArea>
            <Splitter aria-label="Collapse panel">
              <svg width="5" height="8"><path d="M0 0v8l5-4z" fill="#e01010" /></svg>
            </Splitter>
          </SideBody>
        </Side>

        <Document>
          <DocTabs role="tablist">
            <DocTab role="tab" aria-selected="false">
              <svg width="79" height="22"><path d="M0 21.500 9 2.500q1-2 3-2h55q3 0 4 2l4 8-5 11z" fill="#f4f4f4" stroke="#8e9ca6" /></svg>
              <DocTabText>Welcome</DocTabText>
            </DocTab>
            <DocTab role="tab" aria-selected="true" $active>
              <svg width="127" height="22"><path d="M0 21.500 8 2.500q1-2 3-2h105q3 0 4 2l6 19" fill="#efefef" stroke="#8e9ca6" /></svg>
              <DocTabText $active>
                QP16_H7_ANT_SCH
                <CloseMark><svg width="7" height="7"><path d="M1 1l5 5M6 1 1 6" stroke="#fff" strokeWidth="1.500" /></svg></CloseMark>
              </DocTabText>
            </DocTab>
          </DocTabs>
          <Toolbar>
            <ToolButton aria-label="Open"><ToolIcon kind="open" /></ToolButton>
            <ToolButton aria-label="Rotate right"><ToolIcon kind="left" /></ToolButton>
            <ToolButton aria-label="Rotate left"><ToolIcon kind="right" /></ToolButton>
            <Separator />
            <Field>Page: <FieldInput $width={40} defaultValue="1" /></Field>
            <PageTotal>/ 3</PageTotal>
            <ToolButton aria-label="Previous page"><ToolIcon kind="prev" /></ToolButton>
            <ToolButton aria-label="Next page"><ToolIcon kind="next" /></ToolButton>
            <ToolButton aria-label="Fit width"><ToolIcon kind="width" /></ToolButton>
            <ToolButton aria-label="Fit page"><ToolIcon kind="fit" /></ToolButton>
            <ToolButton aria-label="Zoom out"><ToolIcon kind="minus" /></ToolButton>
            <ToolButton aria-label="Zoom in"><ToolIcon kind="plus" /></ToolButton>
            <Separator />
            <Field>Find: <FieldInput $width={160} /></Field>
            <ToolButton aria-label="Find previous"><ToolIcon kind="findPrev" /></ToolButton>
            <ToolButton aria-label="Find next"><ToolIcon kind="findNext" /></ToolButton>
            <ToolButton aria-label="Match case"><ToolIcon kind="case" /></ToolButton>
          </Toolbar>
          <Viewer>
            <Desk>
              <Sheet viewBox="408 163 951 671" role="img" aria-label="QP16_H7_ANT_SCH">
                <FrameAndZones />
                <Antenna />
                <Vibrator />
                <KeyBacklight />
                <UsbConnector />
                <BoardConnector />
                <Speaker />
                <Microphone />
                <TitleBlock />
              </Sheet>
            </Desk>
            <ViewerBar>
              <ArrowButton aria-label="Scroll up"><Chevron turn={0} /></ArrowButton>
              <Thumb $grow={212}><Grip /></Thumb>
              <Track $grow={429} />
              <ArrowButton aria-label="Scroll down"><Chevron turn={180} /></ArrowButton>
            </ViewerBar>
          </Viewer>
        </Document>
      </Main>

      <StatusBar>
        <Version>Version:1.0.0.52</Version>
        <span>Current [QP16_H7_ANT_SCH]</span>
      </StatusBar>
    </Window>
  );
}
